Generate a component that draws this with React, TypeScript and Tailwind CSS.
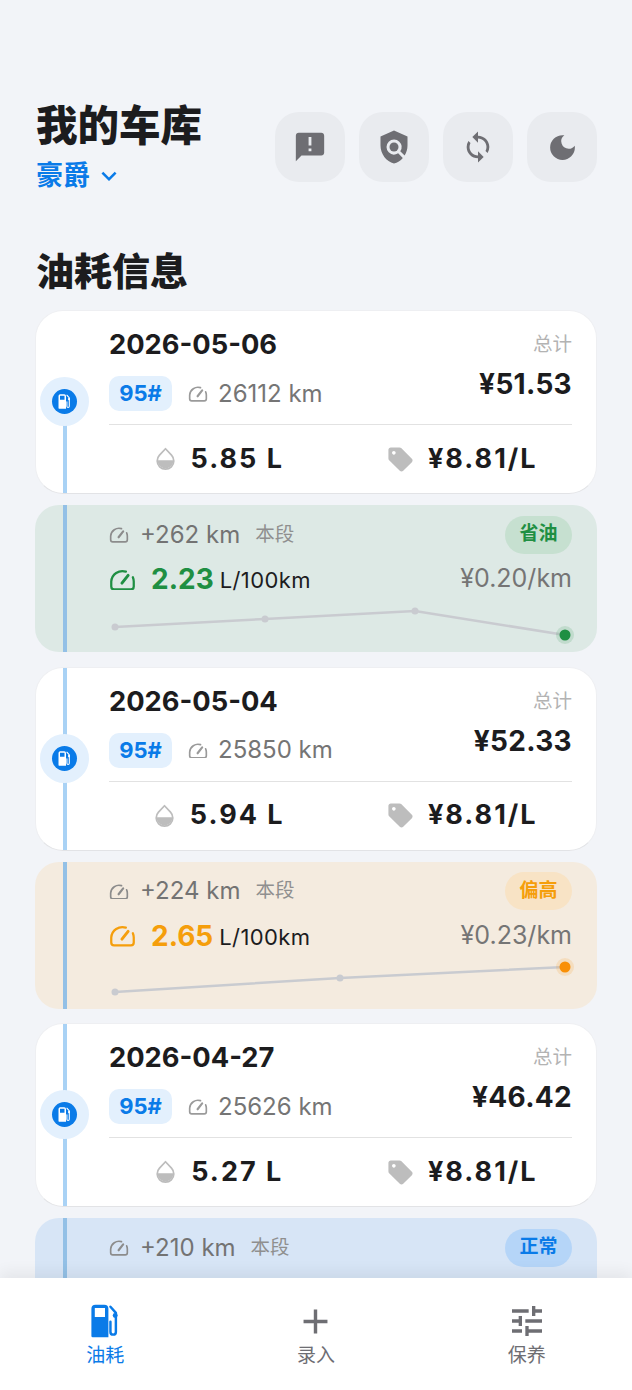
import React from 'react';
import { MdAnnouncement, MdPolicy, MdSync, MdDarkMode, MdSell, MdTune, MdAdd, MdKeyboardArrowDown } from 'react-icons/md';

const FONT = "font-['Inter','Noto_Sans_CJK_SC',sans-serif]";

// gauge with a closed base, used for odometer and consumption rows
const Gauge: React.FC<{ className?: string; width?: number }> = ({ className, width = 20 }) => (
  <svg viewBox="0 0 24 20" width={width} height={(width * 20) / 24} fill="none" stroke="currentColor" strokeWidth="2" strokeLinecap="round" strokeLinejoin="round" className={className}>
    <path d="M15 3.2A10 10 0 0 0 2 12v4.5A2.5 2.5 0 0 0 4.500 19h15a2.500 2.500 0 0 0 2.500-2.500V12a10 10 0 0 0-.8-3.800" />
    <path d="M11.500 13.500 17 6.500" strokeWidth="2.600" />
  </svg>
);

const Drop: React.FC = () => (
  <svg viewBox="0 0 24 28" width="21" height="24" fill="none">
    <path d="M12 2 5 9.500a9.700 9.700 0 1 0 14 0Z" stroke="#bdbdbd" strokeWidth="2" strokeLinejoin="round" />
    <path d="M2.500 15.500h19a9.500 9.500 0 0 1-19 0Z" fill="#bdbdbd" />
  </svg>
);

const Pump: React.FC<{ size: number; className?: string }> = ({ size, className }) => (
  <svg viewBox="0 0 24 25" width={size} height={size} className={className}>
    <path fillRule="evenodd" fill="currentColor" d="M2 3.500A3 3 0 0 1 5 .5h6.500a3 3 0 0 1 3 3V24.500H3a1 1 0 0 1-1-1ZM4.500 3v6.500h7.500V3Z" />
    <path d="M16 2l4 4.500V20.500a2 2 0 0 1-4 0V13" fill="none" stroke="currentColor" strokeWidth="1.800" strokeLinecap="round" strokeLinejoin="round" />
    <circle cx="19.500" cy="8.500" r="1.800" fill="currentColor" />
  </svg>
);

type Fill = { date: string; km: number; total: string; liters: string };
type Segment = {
  dist: number;
  tag: string;
  tagClass: string;
  bgClass: string;
  accentClass: string;
  rate?: string;
  cost?: string;
  points?: [number, number][];
  dot?: string;
};

const ITEMS: { fill: Fill; seg: Segment }[] = [
  {
    fill: { date: '2026-05-06', km: 26112, total: '¥51.53', liters: '5.85 L' },
    seg: {
      dist: 262, tag: '省油', tagClass: 'bg-[#c6e0d0] text-[#1f8f43]', bgClass: 'bg-[#dde9e5]', accentClass: 'text-[#1f8f43]',
      rate: '2.23', cost: '¥0.20/km', dot: '#1f8f43',
      points: [[6, 24], [156, 16], [306, 8], [456, 32]],
    },
  },
  {
    fill: { date: '2026-05-04', km: 25850, total: '¥52.33', liters: '5.94 L' },
    seg: {
      dist: 224, tag: '偏高', tagClass: 'bg-[#f8e3c5] text-[#f59e0b]', bgClass: 'bg-[#f4ebdf]', accentClass: 'text-[#f59e0b]',
      rate: '2.65', cost: '¥0.23/km', dot: '#f98f05',
      points: [[6, 32], [231, 18], [456, 7]],
    },
  },
  {
    fill: { date: '2026-04-27', km: 25626, total: '¥46.42', liters: '5.27 L' },
    seg: { dist: 210, tag: '正常', tagClass: 'bg-[#b5d5f8] text-[#0a7be8]', bgClass: 'bg-[#d7e5f6]', accentClass: 'text-[#0a7be8]' },
  },
];

const FillCard: React.FC<{ fill: Fill; first: boolean }> = ({ fill, first }) => (
  <div className="relative h-[184px] rounded-[28px] border border-[#eeeff2] border-b-[#e2e3e6] bg-white pl-[73px] pr-[24px] pt-[15px] overflow-hidden">
    <div className={first ? 'absolute left-[27px] top-[114px] bottom-0 w-[4px] bg-[#a9d2f5]' : 'absolute left-[27px] top-0 bottom-0 w-[4px] bg-[#a9d2f5]'} />
    <div className="absolute left-[4px] top-[66px] flex h-[49px] w-[49px] items-center justify-center rounded-full bg-[#e3f0fd]">
      <div className="flex h-[25px] w-[25px] items-center justify-center rounded-full bg-[#0a7be8] text-white">
        <Pump size={15} />
      </div>
    </div>

    <div className="flex justify-between">
      <div>
        <div className="h-[36px] text-[27.3px] font-bold leading-[38px] text-[#1c1c1e]">{fill.date}</div>
        <div className="mt-[14px] flex h-[35px] items-center">
          <span className="flex h-[35px] w-[63px] items-center justify-center rounded-[10px] bg-[#e3f0fd] text-[22px] font-bold text-[#0a7be8]">95#</span>
          <Gauge className="ml-[16px] text-[#9a9a9a]" />
          <span className="ml-[10px] text-[24px] text-[#757575]">{fill.km} km</span>
        </div>
      </div>
      <div className="text-right">
        <div className="h-[36px] text-[19.5px] leading-[36px] text-[#b3b3b3]">总计</div>
        <div className="mt-[2px] text-[28px] font-bold tracking-[0.3px] leading-[40px] text-[#1c1c1e]">{fill.total}</div>
      </div>
    </div>

    <div className="mt-[13px] h-[1px] bg-[#e2e2e2]" />

    <div className="flex h-[68px] items-center">
      <div className="flex flex-1 items-center justify-center gap-[15px]">
        <Drop />
        <span className="text-[27px] font-bold tracking-[2px] text-[#1c1c1e]">{fill.liters}</span>
      </div>
      <div className="flex flex-1 items-center justify-center gap-[13px] pl-[22px]">
        <MdSell size={29} className="text-[#bdbdbd]" />
        <span className="text-[27px] font-bold tracking-[2px] text-[#1c1c1e]">¥8.81/L</span>
      </div>
    </div>
  </div>
);

const SegmentCard: React.FC<{ seg: Segment }> = ({ seg }) => {
  const pts = seg.points ?? [];
  const last = pts[pts.length - 1];
  return (
    <div className={`relative h-[147px] overflow-hidden rounded-[24px] ${seg.bgClass} pl-[74px] pr-[25px] pt-[10px]`}>
      <div className="absolute left-[28px] top-0 bottom-0 w-[4px] bg-[#93c0e6]" />
      <div className="flex h-[39px] items-center justify-between">
        <div className="flex items-center">
          <Gauge className="text-[#8c8c8c]" />
          <span className="ml-[11px] text-[24px] text-[#737373]">+{seg.dist} km</span>
          <span className="ml-[15px] text-[19.5px] text-[#8f8f8f]">本段</span>
        </div>
        <span className={`flex h-[38px] w-[67px] items-center justify-center rounded-full text-[19px] font-bold ${seg.tagClass}`}>{seg.tag}</span>
      </div>
      {seg.rate && (
        <>
          <div className="mt-[5px] flex h-[40px] items-center justify-between">
            <div className="flex items-center">
              <Gauge width={27} className={seg.accentClass} />
              <span className={`ml-[15px] text-[28px] font-bold ${seg.accentClass}`}>{seg.rate}</span>
              <span className="ml-[6px] mt-[3px] text-[22px] tracking-[0.4px] text-[#1c1c1e]">L/100km</span>
            </div>
            <span className="text-[25px] text-[#757575]">{seg.cost}</span>
          </div>
          <svg width="462" height="40" viewBox="0 0 462 40" className="mt-[4px] block overflow-visible">
            <polyline points={pts.map(p => p.join(',')).join(' ')} fill="none" stroke="#c9cbd0" strokeWidth="2.500" />
            {pts.slice(0, -1).map(p => (
              <circle key={p[0]} cx={p[0]} cy={p[1]} r="3.500" fill="#c9cbd0" />
            ))}
            <circle cx={last[0]} cy={last[1]} r="9" fill={seg.dot} opacity="0.15" />
            <circle cx={last[0]} cy={last[1]} r="5.500" fill={seg.dot} />
          </svg>
        </>
      )}
    </div>
  );
};

const HEADER_ICONS = [
  { Icon: MdAnnouncement, size: 34 },
  { Icon: MdPolicy, size: 36 },
  { Icon: MdSync, size: 34 },
  { Icon: MdDarkMode, size: 33 },
];

export default function App() {
  return (
    <div className={`flex h-[1390px] w-[632px] flex-col overflow-hidden bg-[#f2f4f8] ${FONT}`}>
      <main className="flex-1 overflow-hidden px-[35px] pt-[101px]">
        <div className="flex h-[93px] items-start justify-between">
          <div className="pl-[1px]">
            <h1 className="text-[41.5px] font-black leading-[50px] text-[#1c1c1e]">我的车库</h1>
            <div className="mt-[7px] flex h-[36px] items-center text-[#0a7be8]">
              <span className="text-[27px] font-bold leading-[36px]">豪爵</span>
              <MdKeyboardArrowDown size={30} className="ml-[4px]" />
            </div>
          </div>
          <div className="mt-[11px] flex gap-[14px]">
            {HEADER_ICONS.map(({ Icon, size }, i) => (
              <button key={i} className="flex h-[70px] w-[70px] items-center justify-center rounded-[24px] bg-[#e9ebef] text-[#6e6e73]">
                <Icon size={size} />
              </button>
            ))}
          </div>
        </div>

        <h2 className="mt-[52px] pl-[1px] text-[38px] font-black leading-[50px] text-[#1c1c1e]">油耗信息</h2>

        <div className="mt-[14px] flex flex-col gap-[14.5px]">
          {ITEMS.map((item, i) => (
            <div key={item.fill.date} className="flex flex-col gap-[11px]">
              <FillCard fill={item.fill} first={i === 0} />
              <SegmentCard seg={item.seg} />
            </div>
          ))}
        </div>
      </main>

      <nav className="relative grid h-[112px] shrink-0 grid-cols-3 bg-white pt-[25px] shadow-[0_-6px_14px_rgba(0,0,0,0.06)]">
        <div className="flex flex-col items-center text-[#0a7be8]">
          <div className="flex h-[36px] items-center"><Pump size={34} /></div>
          <span className="mt-[3px] text-[19px] leading-[28px]">油耗</span>
        </div>
        <div className="flex flex-col items-center text-[#6e6e73]">
          <div className="flex h-[36px] items-center"><MdAdd size={41} /></div>
          <span className="mt-[3px] text-[19px] leading-[28px]">录入</span>
        </div>
        <div className="flex flex-col items-center text-[#6e6e73]">
          <div className="flex h-[36px] items-center"><MdTune size={40} /></div>
          <span className="mt-[3px] text-[19px] leading-[28px]">保养</span>
        </div>
      </nav>
    </div>
  );
}
